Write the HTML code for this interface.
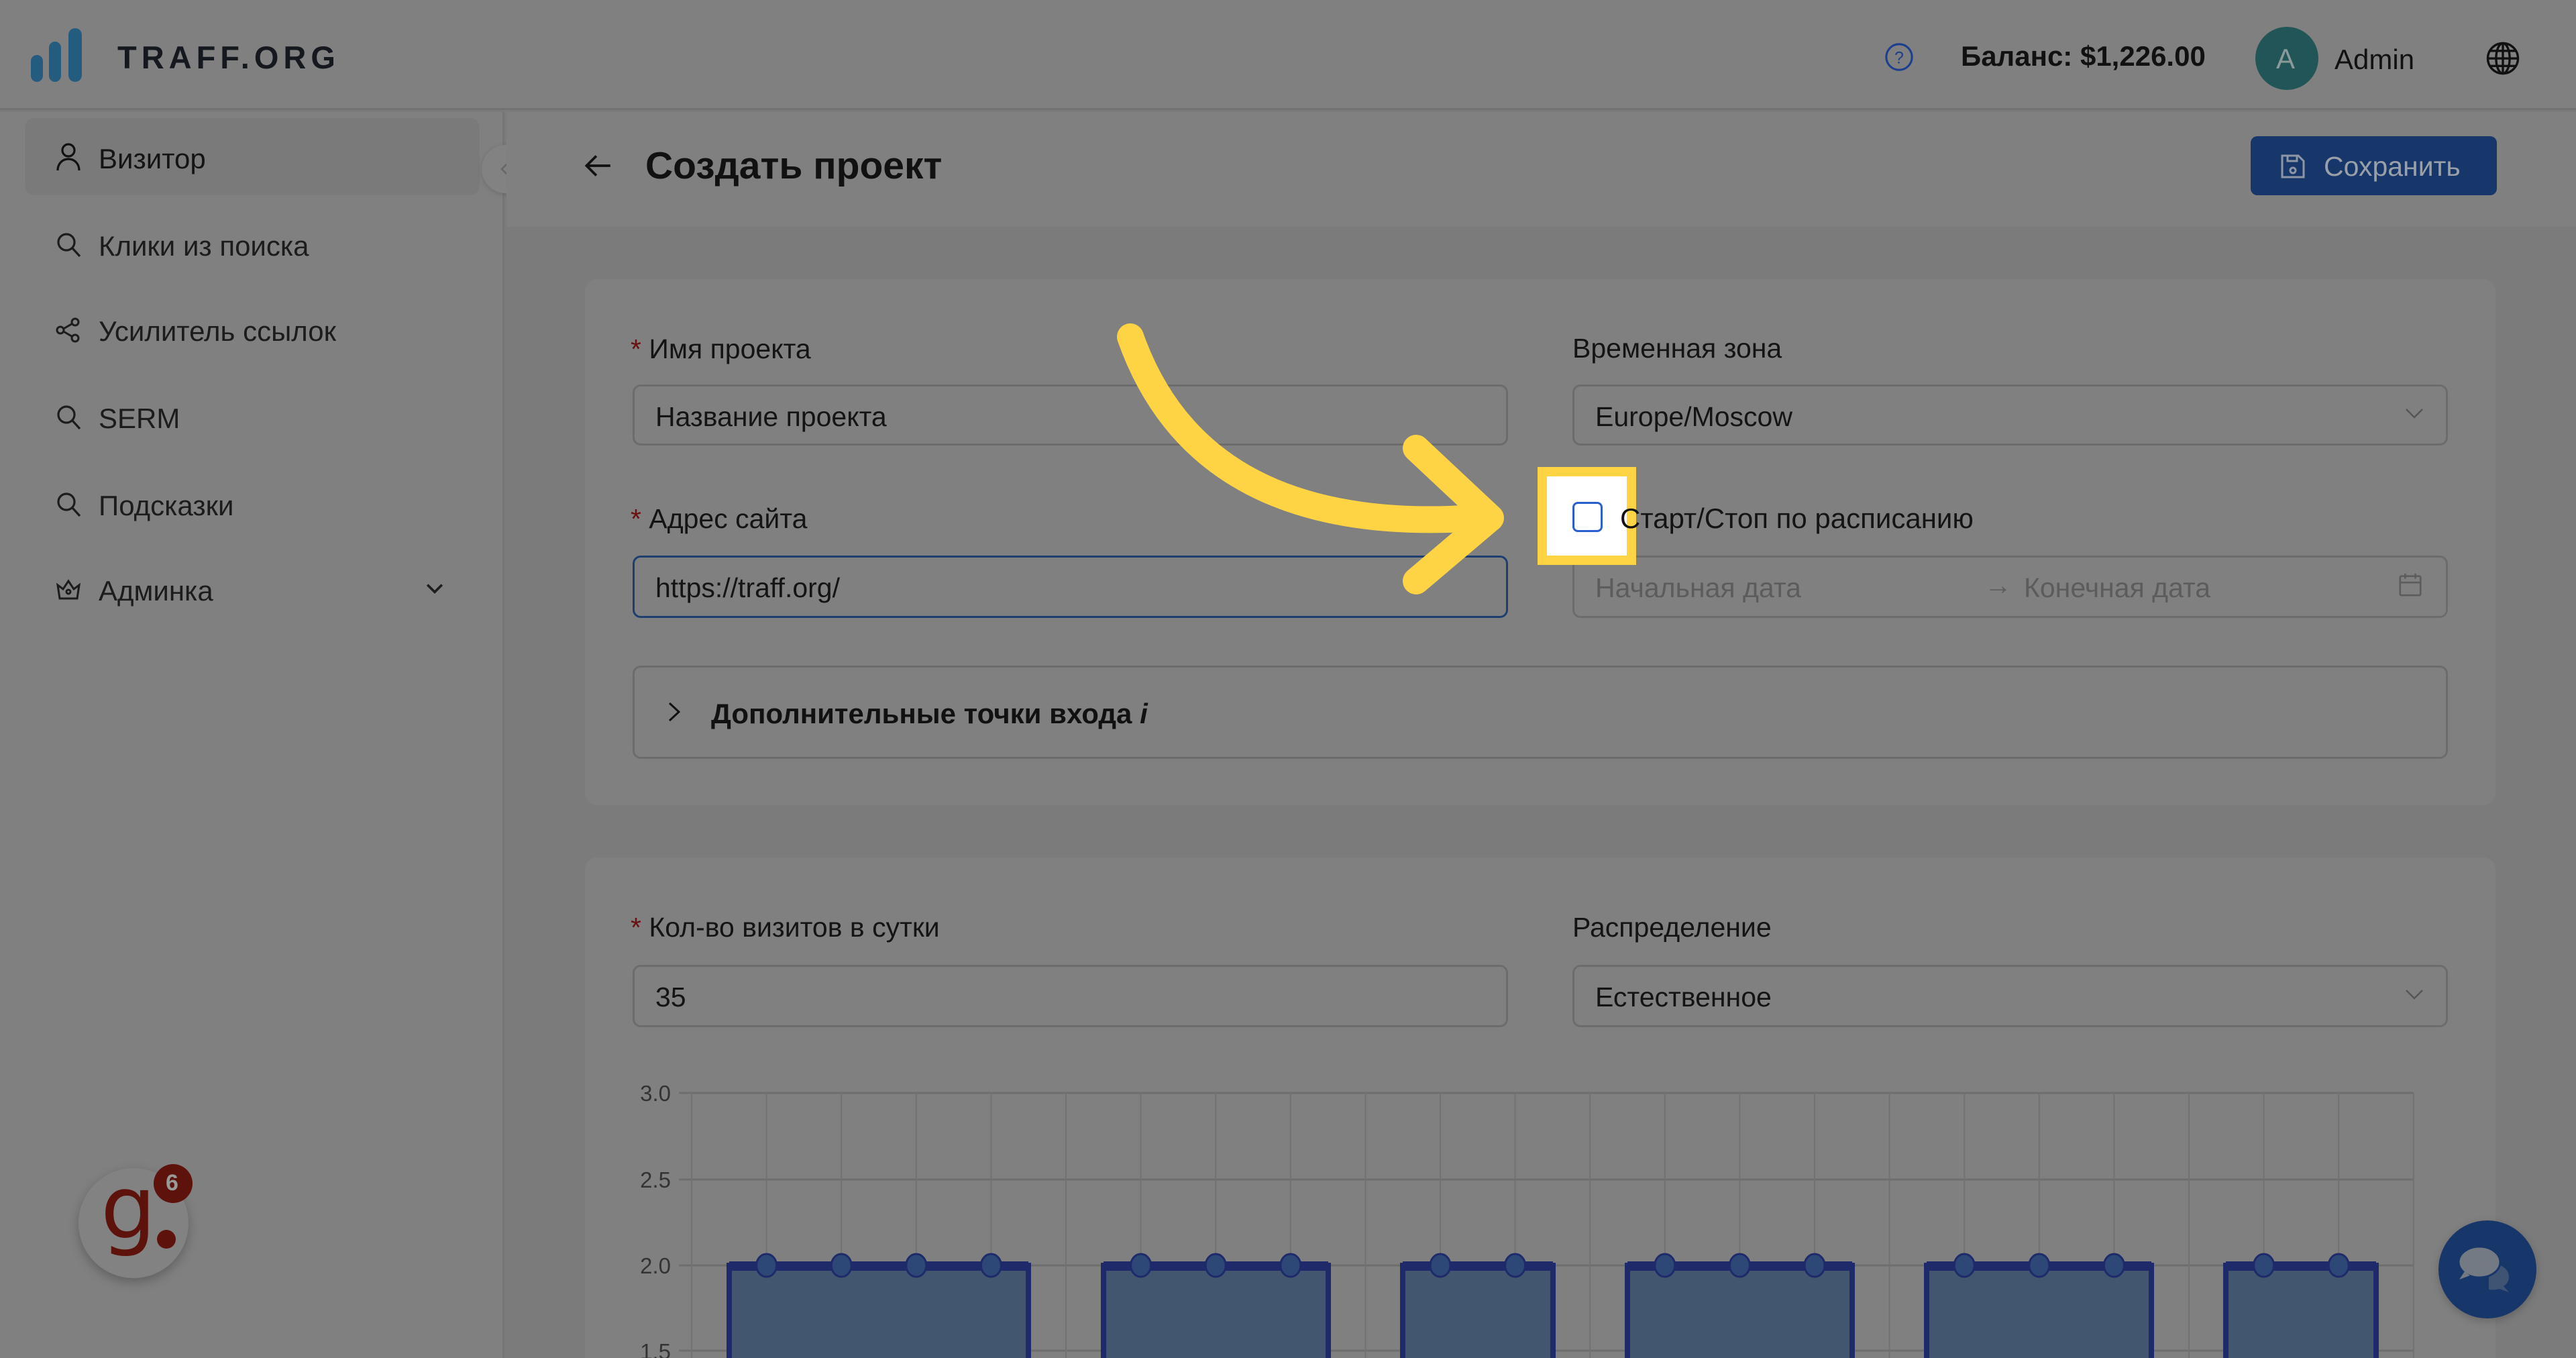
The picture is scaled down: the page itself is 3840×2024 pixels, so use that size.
<!DOCTYPE html>
<html style="width:3840px;height:2024px;overflow:hidden"><head><meta charset="utf-8"><style>
*{margin:0;padding:0;box-sizing:border-box}
body{width:3840px;height:2024px;overflow:hidden;background:#7b7b7b;font-family:"Liberation Sans","DejaVu Sans",sans-serif;color:#111;position:relative}
.a{position:absolute}
.t{position:absolute;white-space:nowrap;line-height:1}
.inp{position:absolute;border:3px solid #6c6c6c;border-radius:12px;background:#808080}
.lbl{font-size:41px;color:#141414}
.star{color:#6a1010}
</style></head><body>
<!-- header -->
<div class="a" style="left:0;top:0;width:3840px;height:164px;background:#808080;border-bottom:3px solid #727272"></div>
<div class="a" style="left:46px;top:82px;width:18px;height:40px;border-radius:9px;background:#245c80"></div>
<div class="a" style="left:73px;top:62px;width:18px;height:60px;border-radius:9px;background:#245c80"></div>
<div class="a" style="left:102px;top:42px;width:20px;height:80px;border-radius:10px;background:#245c80"></div>
<div class="t" style="left:175px;top:62px;font-size:47px;font-weight:bold;letter-spacing:7px;color:#15191f">TRAFF.ORG</div>
<svg class="a" style="left:2808px;top:62px" width="46" height="46" viewBox="0 0 24 24"><circle cx="12" cy="12" r="10" fill="none" stroke="#1c3e90" stroke-width="1.6"/><text x="12" y="17" font-size="13" text-anchor="middle" fill="#1c3e90" font-family="Liberation Sans">?</text></svg>
<div class="t" style="left:2923px;top:63px;font-size:42px;font-weight:bold;color:#111">Баланс: $1,226.00</div>
<div class="a" style="left:3362px;top:40px;width:94px;height:94px;border-radius:50%;background:#225557"></div>
<div class="t" style="left:3393px;top:67px;font-size:42px;color:#8a9a9a">A</div>
<div class="t" style="left:3480px;top:68px;font-size:42px;color:#111">Admin</div>
<svg class="a" style="left:3704px;top:60px" width="54" height="54" viewBox="0 0 24 24" fill="none" stroke="#111" stroke-width="1.5"><circle cx="12" cy="12" r="10"/><ellipse cx="12" cy="12" rx="4.5" ry="10"/><path d="M2 12h20M3.5 7h17M3.5 17h17M12 2v20"/></svg>
<!-- sidebar -->
<div class="a" style="left:0;top:167px;width:752px;height:1857px;background:#808080;border-right:3px solid #767676"></div>
<div class="a" style="left:37px;top:176px;width:678px;height:115px;border-radius:14px;background:#7a7a7a"></div>
<svg class="a" style="left:82px;top:212px" width="40" height="44" viewBox="0 0 20 22" fill="none" stroke="#111" stroke-width="1.6"><circle cx="10" cy="6" r="4.5"/><path d="M2 21c0-5 3.5-8.5 8-8.5s8 3.5 8 8.5"/></svg>
<div class="t lbl" style="left:147px;top:216px;font-size:42px">Визитор</div>
<div class="t lbl" style="left:147px;top:346px;font-size:42px;color:#1c1c1c">Клики из поиска</div>
<div class="t lbl" style="left:147px;top:473px;font-size:42px;color:#1c1c1c">Усилитель ссылок</div>
<div class="t lbl" style="left:147px;top:603px;font-size:42px;color:#1c1c1c">SERM</div>
<div class="t lbl" style="left:147px;top:733px;font-size:42px;color:#1c1c1c">Подсказки</div>
<div class="t lbl" style="left:147px;top:860px;font-size:42px;color:#1c1c1c">Админка</div>
<svg class="a" style="left:82px;top:344px" width="40" height="44" viewBox="0 0 20 22" fill="none" stroke="#1c1c1c" stroke-width="1.6"><circle cx="8.5" cy="8.5" r="6"/><path d="M13 13l5.5 6"/></svg>
<svg class="a" style="left:82px;top:472px" width="40" height="40" viewBox="0 0 20 20" fill="none" stroke="#1c1c1c" stroke-width="1.5"><circle cx="15" cy="4" r="2.5"/><circle cx="4" cy="10" r="2.5"/><circle cx="15" cy="16" r="2.5"/><path d="M6.3 9l6.5-3.8M6.3 11l6.5 3.8"/></svg>
<svg class="a" style="left:82px;top:601px" width="40" height="44" viewBox="0 0 20 22" fill="none" stroke="#1c1c1c" stroke-width="1.6"><circle cx="8.5" cy="8.5" r="6"/><path d="M13 13l5.5 6"/></svg>
<svg class="a" style="left:82px;top:731px" width="40" height="44" viewBox="0 0 20 22" fill="none" stroke="#1c1c1c" stroke-width="1.6"><circle cx="8.5" cy="8.5" r="6"/><path d="M13 13l5.5 6"/></svg>
<svg class="a" style="left:82px;top:858px" width="40" height="40" viewBox="0 0 20 20" fill="none" stroke="#1c1c1c" stroke-width="1.5"><path d="M2 7l4 3 4-6 4 6 4-3-1.5 10h-13z"/><circle cx="10" cy="12" r="1.5"/></svg>
<svg class="a" style="left:630px;top:862px" width="36" height="30" viewBox="0 0 20 16" fill="none" stroke="#1c1c1c" stroke-width="2"><path d="M4 5l6 6 6-6"/></svg>
<div class="a" style="left:718px;top:216px;width:72px;height:72px;border-radius:50%;background:#828282;box-shadow:0 2px 8px rgba(0,0,0,.15)"></div>
<svg class="a" style="left:744px;top:240px" width="20" height="24" viewBox="0 0 10 12" fill="none" stroke="#666" stroke-width="1.3"><path d="M7 1L2 6l5 5"/></svg>
<!-- page header -->
<div class="a" style="left:755px;top:167px;width:3085px;height:171px;background:#808080"></div>
<svg class="a" style="left:866px;top:222px" width="50" height="50" viewBox="0 0 24 24" fill="none" stroke="#111" stroke-width="1.8"><path d="M21 12H4M11 5l-7 7 7 7"/></svg>
<div class="t" style="left:962px;top:219px;font-size:57px;font-weight:bold;color:#111">Создать проект</div>
<div class="a" style="left:3355px;top:203px;width:367px;height:88px;border-radius:10px;background:#17366a"></div>
<svg class="a" style="left:3398px;top:228px" width="40" height="40" viewBox="0 0 20 20" fill="none" stroke="#8e96a6" stroke-width="1.5"><path d="M2 2h12l4 4v12H2z"/><path d="M6 2v4h7V2"/><circle cx="10" cy="13" r="2"/></svg>
<div class="t" style="left:3464px;top:228px;font-size:41px;color:#9aa0aa">Сохранить</div>
<!-- card 1 -->
<div class="a" style="left:872px;top:416px;width:2848px;height:784px;border-radius:18px;background:#808080"></div>
<div class="t lbl" style="left:940px;top:500px"><span class="star">* </span>Имя проекта</div>
<div class="inp" style="left:943px;top:573px;width:1305px;height:91px"></div>
<div class="t lbl" style="left:977px;top:601px">Название проекта</div>
<div class="t lbl" style="left:2344px;top:499px">Временная зона</div>
<div class="inp" style="left:2344px;top:573px;width:1305px;height:91px"></div>
<div class="t lbl" style="left:2378px;top:601px">Europe/Moscow</div>
<svg class="a" style="left:3583px;top:604px" width="32" height="24" viewBox="0 0 16 12" fill="none" stroke="#555" stroke-width="1.2"><path d="M2 3l6 6 6-6"/></svg>
<div class="t lbl" style="left:940px;top:753px"><span class="star">* </span>Адрес сайта</div>
<div class="inp" style="left:943px;top:828px;width:1305px;height:93px;border-color:#1d3f70"></div>
<div class="t lbl" style="left:977px;top:856px">https://traff.org/</div>
<div class="t lbl" style="left:2415px;top:752px;font-size:42px">Старт/Стоп по расписанию</div>
<div class="inp" style="left:2344px;top:828px;width:1305px;height:93px"></div>
<div class="t lbl" style="left:2378px;top:856px;color:#5c5c5c">Начальная дата</div>
<div class="t lbl" style="left:2958px;top:852px;color:#5c5c5c">→</div>
<div class="t lbl" style="left:3017px;top:856px;color:#5c5c5c">Конечная дата</div>
<svg class="a" style="left:3574px;top:853px" width="38" height="38" viewBox="0 0 20 20" fill="none" stroke="#5c5c5c" stroke-width="1.4"><rect x="2" y="3" width="16" height="15" rx="1"/><path d="M2 8h16M6 1v4M14 1v4"/></svg>
<div class="inp" style="left:943px;top:992px;width:2706px;height:139px"></div>
<svg class="a" style="left:994px;top:1044px" width="22" height="34" viewBox="0 0 11 17" fill="none" stroke="#111" stroke-width="1.5"><path d="M2 2l7 6.5L2 15"/></svg>
<div class="t" style="left:1060px;top:1043px;font-size:42px;font-weight:bold;color:#111">Дополнительные точки входа <i>i</i></div>
<!-- card 2 -->
<div class="a" style="left:872px;top:1278px;width:2848px;height:746px;border-radius:18px 18px 0 0;background:#808080"></div>
<div class="t lbl" style="left:940px;top:1362px"><span class="star">* </span>Кол-во визитов в сутки</div>
<div class="inp" style="left:943px;top:1438px;width:1305px;height:93px"></div>
<div class="t lbl" style="left:977px;top:1466px">35</div>
<div class="t lbl" style="left:2344px;top:1362px">Распределение</div>
<div class="inp" style="left:2344px;top:1438px;width:1305px;height:93px"></div>
<div class="t lbl" style="left:2378px;top:1466px">Естественное</div>
<svg class="a" style="left:3583px;top:1470px" width="32" height="24" viewBox="0 0 16 12" fill="none" stroke="#555" stroke-width="1.2"><path d="M2 3l6 6 6-6"/></svg>
<svg class="a" style="left:0;top:0" width="3840" height="2024">
<g font-family="Liberation Sans" font-size="33" fill="#333" text-anchor="end">
<text x="1000" y="1641">3.0</text><text x="1000" y="1770">2.5</text><text x="1000" y="1898">2.0</text><text x="1000" y="2026">1.5</text></g>
<g stroke="#6e6e6e" stroke-width="3"><path d="M1012 1629H3598M1012 1758H3598M1012 1886H3598M1012 2013H3598"/></g>
<path id="vgp" stroke="#727272" stroke-width="2" fill="none" d=""/>
<g fill="#43566f" stroke="#1f2a6a" stroke-width="8">
<rect x="1087" y="1886" width="446" height="200"/>
<rect x="1645" y="1886" width="335" height="200"/>
<rect x="2091" y="1886" width="224" height="200"/>
<rect x="2426" y="1886" width="335" height="200"/>
<rect x="2872" y="1886" width="335" height="200"/>
<rect x="3318" y="1886" width="224" height="200"/>
</g>
<g fill="none" stroke="#1f2a6a" stroke-width="14"><path d="M1087 1887h446M1645 1887h335M2091 1887h224M2426 1887h335M2872 1887h335M3318 1887h224"/></g>
<g id="dots" fill="#2d4876" stroke="#1f2a6a" stroke-width="3"></g>
<g fill="none" stroke="#ffd444" stroke-width="40" stroke-linecap="round" stroke-linejoin="round">
<path d="M1685 502 Q1790 800 2200 772"/>
<path d="M2111 668 L2222 772 L2111 866"/>
</g>
</svg>
<!-- highlight -->
<div class="a" style="left:2292px;top:696px;width:147px;height:146px;background:#fff;border:14px solid #ffd444"></div>
<div class="a" style="left:2344px;top:748px;width:45px;height:45px;border:3px solid #2b5fd0;border-radius:8px;background:#fff"></div>
<div class="t lbl" style="left:2415px;top:752px;width:24px;overflow:hidden;color:#111;font-size:42px">С</div>
<!-- g badge -->
<div class="a" style="left:117px;top:1741px;width:164px;height:164px;border-radius:50%;background:#828282;box-shadow:0 6px 16px rgba(0,0,0,.25)"></div>
<div class="t" style="left:150px;top:1735px;font-size:130px;color:#5e120c;font-family:'DejaVu Sans',sans-serif">g</div>
<div class="a" style="left:234px;top:1833px;width:28px;height:28px;border-radius:50%;background:#5e120c"></div>
<div class="a" style="left:229px;top:1735px;width:58px;height:58px;border-radius:50%;background:#5e120c"></div>
<div class="t" style="left:247px;top:1746px;font-size:34px;font-weight:bold;color:#999">6</div>
<!-- chat -->
<div class="a" style="left:3635px;top:1819px;width:146px;height:146px;border-radius:50%;background:#17366a;box-shadow:0 4px 12px rgba(0,0,0,.2)"></div>
<svg class="a" style="left:3660px;top:1855px" width="96" height="75" viewBox="0 0 96 75"><path d="M50 28c18 0 30 8 30 20 0 6-3 11-8 14l8 9-14-5c-5 1-10 2-16 1z" fill="#3f5473"/><ellipse cx="36" cy="26" rx="31" ry="23" fill="#737a84" stroke="#17366a" stroke-width="3"/><path d="M14 40l-8 12 16-6z" fill="#737a84"/></svg>
<script>
(function(){var ns="http://www.w3.org/2000/svg";var d="";for(var k=0;k<=23;k++){var x=1031+k*111.6;d+="M"+x.toFixed(1)+" 1629V2024";}document.getElementById("vgp").setAttribute("d",d);
var idx=[1,2,3,4,6,7,8,10,11,13,14,15,17,18,19,21,22];var g=document.getElementById("dots");idx.forEach(function(k){var c=document.createElementNS(ns,"ellipse");c.setAttribute("cx",(1031+k*111.6).toFixed(1));c.setAttribute("cy","1886");c.setAttribute("rx","15");c.setAttribute("ry","17");g.appendChild(c);});})();
</script>
</body></html>
